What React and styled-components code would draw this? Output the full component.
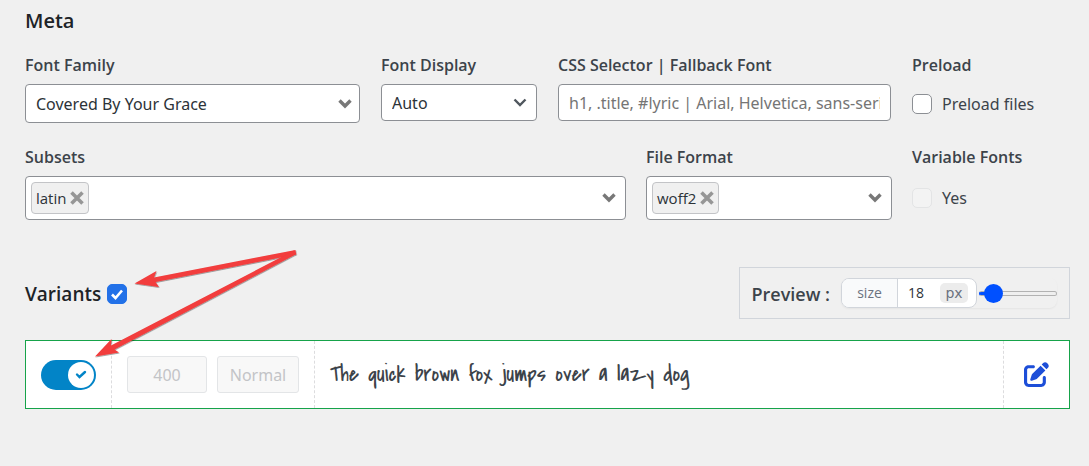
import React, { useState } from "react";
import styled, { createGlobalStyle } from "styled-components";
import { FaPenToSquare } from "react-icons/fa6";

const GlobalStyle = createGlobalStyle`
  *, *::before, *::after { box-sizing: border-box; }
  body {
    margin: 0;
    background: #f0f0f0;
    color: #3c434a;
    font: 400 16px/24px "Open Sans", "Noto Sans", sans-serif;
  }
  button, input, select { font: inherit; margin: 0; }
`;

const controlFont = `"Noto Sans", "Open Sans", sans-serif`;

const Page = styled.main`
  padding: 5px 19px 24px 25px;
`;

const Heading = styled.h2`
  margin: 0;
  color: #1d2327;
  font-size: ${(p) => p.$size}px;
  line-height: 32px;
  font-weight: 600;
`;

const FieldRow = styled.div`
  display: grid;
  grid-template-columns: ${(p) => p.$columns};
  column-gap: ${(p) => p.$gap}px;
  margin-top: ${(p) => p.$top}px;
`;

const Field = styled.div`
  display: flex;
  flex-direction: column;
  min-width: 0;
`;

const FieldLabel = styled.label`
  margin-bottom: 7px;
  font-size: 16px;
  font-weight: 600;
`;

const SelectWrap = styled.div`
  display: grid;
  align-items: center;
  & > * { grid-area: 1 / 1; }
  & > svg { justify-self: end; margin-right: ${(p) => p.$inset}px; pointer-events: none; }
`;

const Select = styled.select`
  appearance: none;
  width: 100%;
  min-width: 0;
  height: ${(p) => p.$height}px;
  padding: 0 32px 0 10px;
  border: 1px solid #8c8f94;
  border-radius: 4px;
  background: #fff;
  color: #2c3338;
  font-family: ${controlFont};
  font-size: 16px;
`;

const TextInput = styled.input`
  width: 100%;
  height: 37px;
  padding: 0 10px;
  border: 1px solid #8c8f94;
  border-radius: 4px;
  background: #fff;
  font-family: ${controlFont};
  font-size: 16px;
  &::placeholder { color: #757575; opacity: 1; }
`;

const TagBox = styled.div`
  display: flex;
  align-items: center;
  justify-content: space-between;
  height: 44px;
  padding: 0 5px;
  border: 1px solid #8c8f94;
  border-radius: 4px;
  background: #fff;
`;

const Tag = styled.span`
  display: flex;
  align-items: center;
  gap: 4px;
  height: 32px;
  padding: 0 4px;
  border: 1px solid #c3c4c7;
  border-radius: 4px;
  background: #f0f0f0;
  color: #2c3338;
  font-size: 15px;
`;

const IconButton = styled.button`
  display: flex;
  align-items: center;
  justify-content: center;
  padding: 0;
  border: 0;
  background: none;
  color: ${(p) => p.$color};
  cursor: pointer;
`;

const OpenButton = styled(IconButton)`
  padding: 0 4px;
`;

const CheckLine = styled.label`
  display: flex;
  align-items: center;
  gap: 10px;
  height: ${(p) => p.$height}px;
  font-family: ${controlFont};
  font-size: 16px;
`;

const CheckBox = styled.input`
  appearance: none;
  flex: none;
  width: 20px;
  height: 20px;
  border: 1px solid #8c8f94;
  border-radius: 5px;
  background: #fff;
  &:disabled { border-color: #e3e4e5; background: #f3f3f3; }
  &:checked {
    border-color: #2271e8;
    background: #2271e8;
  }
`;

const TickedBox = styled.span`
  display: grid;
  place-items: center;
  & > * { grid-area: 1 / 1; }
  & > svg { pointer-events: none; }
`;

const VariantsBar = styled.div`
  position: relative;
  display: flex;
  align-items: center;
  justify-content: space-between;
  margin-top: 47px;
`;

const HeadingGroup = styled.div`
  display: flex;
  align-items: center;
  gap: 6px;
  padding-top: 2px;
`;

const Pointers = styled.svg`
  position: absolute;
  left: 60px;
  top: -27px;
  z-index: 1;
  pointer-events: none;
`;

const PreviewBox = styled.div`
  display: flex;
  align-items: center;
  height: 52px;
  padding: 0 12px;
  border: 1px solid #d1d5db;
`;

const PreviewTitle = styled.span`
  margin-right: 11px;
  padding-top: 2px;
  font-size: 18px;
  font-weight: 600;
`;

const SizeControl = styled.div`
  display: flex;
  align-items: center;
  gap: 2px;
  border-radius: 8px;
  box-shadow: 0 1px 2px rgba(0, 0, 0, 0.05);
`;

const SizeGroup = styled.div`
  display: flex;
  align-items: center;
  width: 136px;
  height: 30px;
  overflow: hidden;
  border: 1px solid #d1d5db;
  border-radius: 8px;
  background: #fff;
`;

const SizeLabel = styled.label`
  align-self: stretch;
  display: flex;
  align-items: center;
  justify-content: center;
  width: 56px;
  border-right: 1px solid #d1d5db;
  background: #f9fafb;
  color: #6b7280;
  font-size: 14px;
`;

const SizeInput = styled.input`
  width: 42px;
  padding: 0 0 0 10px;
  border: 0;
  background: none;
  color: #2c3338;
  font-size: 14px;
`;

const Unit = styled.span`
  width: 28px;
  border-radius: 5px;
  background: #ececec;
  color: #6b7280;
  font: 14px/20px "DejaVu Sans", sans-serif;
  text-align: center;
`;

const Range = styled.input`
  appearance: none;
  width: 78px;
  height: 20px;
  background: none;
  &::-webkit-slider-runnable-track {
    height: 5px;
    border: 1px solid #b2b2b2;
    border-radius: 3px;
    background: linear-gradient(to right, #0050ff 12px, transparent 12px) border-box, #efefef;
    border-left-color: #0050ff;
  }
  &::-webkit-slider-thumb {
    appearance: none;
    width: 19px;
    height: 19px;
    margin-top: -8px;
    border-radius: 50%;
    background: #0050ff;
  }
`;

const VariantCard = styled.div`
  display: flex;
  height: 69px;
  margin-top: 21px;
  border: 1px solid #16a34a;
  background: #fff;
`;

const Cell = styled.div`
  display: flex;
  align-items: center;
  gap: 10px;
  padding: 0 ${(p) => (p.$last ? 20 : 15)}px;
  border-right: ${(p) => (p.$last ? "0" : "1px dashed #dcdcde")};
  flex: ${(p) => (p.$grow ? "1" : "none")};
`;

const ToggleTrack = styled.label`
  display: flex;
  align-items: center;
  justify-content: flex-end;
  width: 55px;
  height: 30px;
  padding: 2px;
  border-radius: 15px;
  background: #0284c7;
  cursor: pointer;
  &:not(:has(input:checked)) { justify-content: flex-start; background: #a7aaad; }
`;

const ToggleKnob = styled.span`
  display: grid;
  place-items: center;
  width: 26px;
  height: 26px;
  border-radius: 50%;
  background: #fff;
  & > * { grid-area: 1 / 1; }
`;

const ToggleInput = styled.input`
  appearance: none;
  width: 26px;
  height: 26px;
`;

const LockedSelect = styled.select`
  appearance: none;
  width: ${(p) => p.$width}px;
  height: 37px;
  padding: 0;
  border: 1px solid #e3e5e7;
  border-radius: 3px;
  background: #f8f8f8;
  color: #c3c4c7;
  font-family: ${controlFont};
  font-size: 16px;
  text-align: center;
  text-align-last: center;
  opacity: 1;
`;

const Sample = styled.p`
  margin: 0;
  font-family: "Covered By Your Grace", "Noto Sans", sans-serif;
  font-size: ${(p) => p.$size}px;
  white-space: nowrap;
`;

function Chevron({ color = "#787878", width = 3 }) {
  return (
    <svg width="14" height="10" viewBox="0 0 14 10" fill="none" stroke={color} strokeWidth={width} aria-hidden="true">
      <path d="M1.500 1.500 7 7 12.500 1.500" />
    </svg>
  );
}

function Cross() {
  return (
    <svg width="14" height="14" viewBox="0 0 14 14" stroke="#969696" strokeWidth="3.6" aria-hidden="true">
      <path d="M1.500 1.500 12.500 12.500M12.500 1.500 1.500 12.500" />
    </svg>
  );
}

function TagField({ id, label, value }) {
  return (
    <Field role="group" aria-labelledby={id}>
      <FieldLabel as="span" id={id}>{label}</FieldLabel>
      <TagBox>
        <Tag>
          {value}
          <IconButton type="button" aria-label={`Remove ${value}`}><Cross /></IconButton>
        </Tag>
        <OpenButton type="button" aria-label={`Open ${label}`}><Chevron width={3.4} /></OpenButton>
      </TagBox>
    </Field>
  );
}

export default function App() {
  const [size, setSize] = useState(18);
  const changeSize = (e) => setSize(Number(e.target.value));
  return (
    <>
      <GlobalStyle />
      <Page>
        <Heading $size={20}>Meta</Heading>
        <FieldRow $columns="335fr 156fr 333fr 158fr" $gap={21} $top={16}>
          <Field>
            <FieldLabel htmlFor="family">Font Family</FieldLabel>
            <SelectWrap $inset={8}>
              <Select id="family" $height={39}><option>Covered By Your Grace</option></Select>
              <Chevron width={3.4} />
            </SelectWrap>
          </Field>
          <Field>
            <FieldLabel htmlFor="display">Font Display</FieldLabel>
            <SelectWrap $inset={10}>
              <Select id="display" $height={37}><option>Auto</option></Select>
              <Chevron color="#50575e" width={2.4} />
            </SelectWrap>
          </Field>
          <Field>
            <FieldLabel htmlFor="selector">CSS Selector | Fallback Font</FieldLabel>
            <TextInput id="selector" placeholder="h1, .title, #lyric | Arial, Helvetica, sans-serif" />
          </Field>
          <Field role="group" aria-labelledby="preload">
            <FieldLabel as="span" id="preload">Preload</FieldLabel>
            <CheckLine $height={39}><CheckBox type="checkbox" />Preload files</CheckLine>
          </Field>
        </FieldRow>
        <FieldRow $columns="601fr 246fr 158fr" $gap={20} $top={22}>
          <TagField id="subsets" label="Subsets" value="latin" />
          <TagField id="format" label="File Format" value="woff2" />
          <Field role="group" aria-labelledby="variable">
            <FieldLabel as="span" id="variable">Variable Fonts</FieldLabel>
            <CheckLine $height={44}><CheckBox type="checkbox" disabled />Yes</CheckLine>
          </Field>
        </FieldRow>

        <VariantsBar>
          <HeadingGroup>
            <Heading $size={19}>Variants</Heading>
            <TickedBox>
              <CheckBox type="checkbox" defaultChecked aria-label="Enable all variants" />
              <svg width="20" height="20" viewBox="0 0 20 20" fill="none" stroke="#fff" strokeWidth="2.6" aria-hidden="true">
                <path d="M5 10.500 8.500 14 15 6.500" />
              </svg>
            </TickedBox>
          </HeadingGroup>
          <Pointers width="220" height="130" viewBox="85 240 220 130" aria-hidden="true">
            <defs>
              <filter id="shade" x="-10%" y="-10%" width="120%" height="120%">
                <feDropShadow dx="0.5" dy="0.8" stdDeviation="0.5" floodColor="#000" floodOpacity="0.45" />
              </filter>
            </defs>
            <g fill="#f23c3c" filter="url(#shade)">
              <path d="M295.500 250 154 277.500 156.500 271 134.500 283.500 159 287 155.500 282 296 254.500Z" />
              <path d="M294 250.500 111 345.500 111.500 339 95 356.500 119 352.500 114.500 349.500 296.500 254Z" />
            </g>
          </Pointers>
          <PreviewBox>
            <PreviewTitle>Preview :</PreviewTitle>
            <SizeControl>
              <SizeGroup>
                <SizeLabel htmlFor="size">size</SizeLabel>
                <SizeInput id="size" value={size} onChange={changeSize} />
                <Unit>px</Unit>
              </SizeGroup>
              <Range type="range" min="14" max="70" value={size} onChange={changeSize} aria-label="Preview size" />
            </SizeControl>
          </PreviewBox>
        </VariantsBar>

        <VariantCard>
          <Cell>
            <ToggleTrack>
              <ToggleKnob>
                <ToggleInput type="checkbox" defaultChecked aria-label="Enable variant 400 Normal" />
                <svg width="12" height="10" viewBox="0 0 12 10" fill="none" stroke="#0284c7" strokeWidth="2.4" strokeLinecap="round" aria-hidden="true">
                  <path d="M2 4.500 4.500 7 10 2" />
                </svg>
              </ToggleKnob>
            </ToggleTrack>
          </Cell>
          <Cell>
            <LockedSelect $width={80} disabled aria-label="Weight"><option>400</option></LockedSelect>
            <LockedSelect $width={82} disabled aria-label="Style"><option>Normal</option></LockedSelect>
          </Cell>
          <Cell $grow>
            <Sample $size={Math.round(size * 1.25)}>The quick brown fox jumps over a lazy dog</Sample>
          </Cell>
          <Cell $last>
            <IconButton type="button" $color="#1d4ed8" aria-label="Edit variant">
              <FaPenToSquare size={25} />
            </IconButton>
          </Cell>
        </VariantCard>
      </Page>
    </>
  );
}
